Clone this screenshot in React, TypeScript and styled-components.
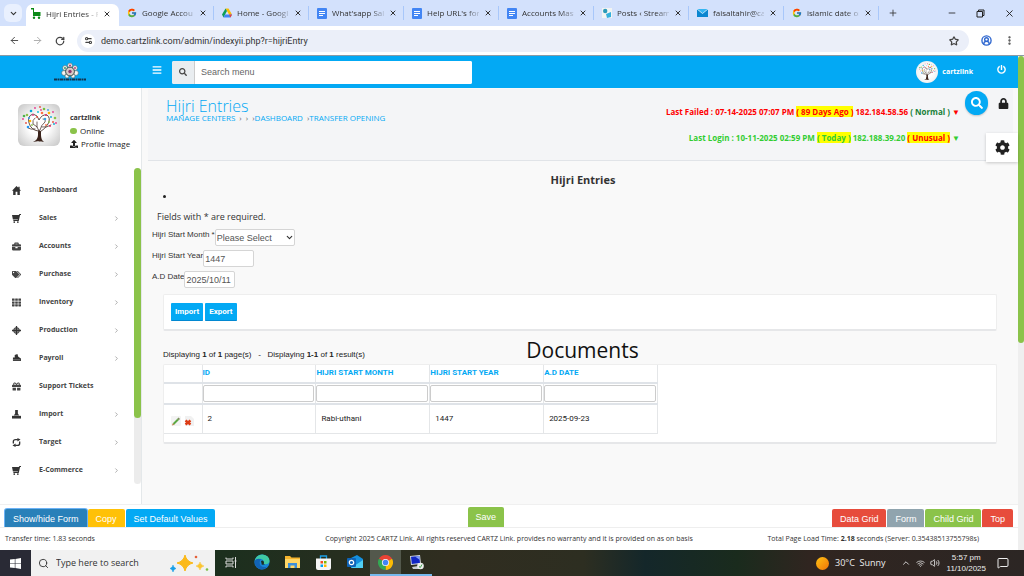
import React from 'react';
import styled, { createGlobalStyle, css } from 'styled-components';
import {
  ArrowLeft, ArrowRight, ChevronDown, ChevronRight, ChevronUp, CircleUserRound, EllipsisVertical,
  MessageSquare, Minus, Plus, RotateCw, Search, Settings2, Star, Volume2, Wifi, X,
} from 'lucide-react';
import {
  FaBars, FaBriefcase, FaCog, FaGift, FaLock, FaPowerOff, FaSearch, FaTags, FaTh, FaUpload,
} from 'react-icons/fa';
import { FcGoogle } from 'react-icons/fc';

const blue = '#03a9f4';
const green = '#8bc34a';
const ui = '"Open Sans", "Noto Sans", sans-serif';
const arial = '"Liberation Sans", Arial, sans-serif';
const roboto = 'Roboto, sans-serif';

const GlobalStyle = createGlobalStyle`
  *, *::before, *::after { box-sizing: border-box; }
  body { margin: 0; font-family: ${ui}; font-size: 8px; line-height: 12px; color: #333; background: #fff; }
  button, input, select { font: inherit; color: inherit; margin: 0; }
  button { border: 0; padding: 0; background: none; display: inline-flex; align-items: center; justify-content: center; }
  a { color: inherit; text-decoration: none; }
  h1, h2, h3, p, ul { margin: 0; padding: 0; font-weight: 400; }
  ul { list-style: none; }
  svg { display: block; flex: none; }
`;

const Screen = styled.div`
  min-height: 100vh;
  display: flex;
  flex-direction: column;
`;

/* ---------- Browser chrome ---------- */

const TabStrip = styled.div`
  height: 26px;
  flex: none;
  display: flex;
  align-items: center;
  padding-left: 4px;
  background: #d3e1fc;
  color: #333;
`;

const TabSearch = styled.button`
  width: 18px;
  height: 18px;
  flex: none;
  margin-right: 4px;
  border-radius: 6px;
  background: #e9f0fe;
`;

const Tab = styled.div<{ $active?: boolean }>`
  flex: 0 1 95px;
  min-width: 0;
  height: 14px;
  display: flex;
  align-items: center;
  gap: 5px;
  padding: 0 6px 0 8px;
  border-right: 1px solid #a8c7fa;
  ${(p) => p.$active && css`
    flex-basis: 93px;
    height: 22px;
    align-self: flex-end;
    padding: 0 8px 3px 5px;
    border: 0;
    border-radius: 7px 7px 0 0;
    background: #fff;
  `}
`;

const TabTitle = styled.span`
  flex: 1;
  min-width: 0;
  white-space: nowrap;
  mask-image: linear-gradient(90deg, #000 75%, #0003);
`;

const WindowButtons = styled.div`
  margin-left: auto;
  display: flex;
  gap: 19px;
  padding-right: 9px;
  color: #222;
`;

const NewTab = styled.button`
  margin-left: 9px;
`;

const Toolbar = styled.div`
  height: 30px;
  flex: none;
  display: flex;
  align-items: center;
  gap: 12px;
  padding: 0 9px;
  border-bottom: 1px solid #8a9aa5;
  background: #fff;
  color: #444;
`;

const AddressBar = styled.div`
  flex: 1;
  height: 22px;
  display: flex;
  align-items: center;
  gap: 6px;
  padding: 0 10px 0 4px;
  border-radius: 11px;
  background: #ebeff9;
`;

const SiteInfo = styled.button`
  width: 14px;
  height: 14px;
  border-radius: 7px;
  background: #fff;
`;

const Address = styled.input`
  flex: 1;
  min-width: 0;
  height: 18px;
  padding: 0;
  border: 0;
  background: none;
  color: #333;
  font-family: ${roboto};
  font-size: 9px;
`;

/* ---------- Page frame ---------- */

const Viewport = styled.div`
  flex: 1;
  display: flex;
`;

const Site = styled.div`
  position: relative;
  flex: 1;
  min-width: 0;
  display: flex;
  flex-direction: column;
`;

const PageTrack = styled.div`
  width: 6px;
  flex: none;
  background: #efefef;
`;

const PageThumb = styled.div`
  height: 58%;
  border-radius: 3px;
  background: ${green};
`;

const Header = styled.header`
  height: 32px;
  flex: none;
  display: flex;
  align-items: center;
  padding-right: 12px;
  background: ${blue};
  color: #fff;
`;

const LogoLink = styled.a`
  flex: 0 0 139px;
  display: flex;
  justify-content: center;
`;

const MenuButton = styled.button`
  flex: 0 0 33px;
  padding: 0 0 5px 2px;
`;

const MenuSearch = styled.label`
  flex: 0 1 300px;
  height: 23px;
  display: flex;
  border-radius: 2px;
  overflow: hidden;
  background: #fff;
  color: #444;
`;

const SearchAddon = styled.span`
  width: 23px;
  display: flex;
  align-items: center;
  justify-content: center;
  border-right: 1px solid #ccc;
  background: #e9edf0;
`;

const MenuSearchInput = styled.input`
  flex: 1;
  min-width: 0;
  padding: 0 6px;
  border: 0;
  font-family: ${arial};
  font-size: 9px;
  &::placeholder { color: #666; opacity: 1; }
`;

const Account = styled.a`
  margin-left: auto;
  display: flex;
  align-items: center;
  gap: 4px;
  font-size: 7px;
  font-weight: 700;
`;

const Avatar = styled.span<{ $large?: boolean }>`
  width: ${(p) => (p.$large ? 42 : 22)}px;
  height: ${(p) => (p.$large ? 42 : 22)}px;
  flex: none;
  display: flex;
  align-items: center;
  justify-content: center;
  border-radius: ${(p) => (p.$large ? '6px' : '50%')};
  background: radial-gradient(circle, #fff 35%, ${(p) => (p.$large ? '#c4c4c4' : '#e4e4e4')});
`;

const PowerButton = styled.button`
  margin-left: 24px;
  padding-bottom: 5px;
`;

const Body = styled.div`
  flex: 1;
  display: flex;
`;

/* ---------- Sidebar ---------- */

const Sidebar = styled.aside`
  width: 142px;
  flex: none;
  display: flex;
  flex-direction: column;
  border-right: 1px solid #e4e8ea;
  background: #fff;
`;

const Profile = styled.div`
  height: 80px;
  display: flex;
  gap: 10px;
  padding: 16px 0 0 18px;
`;

const ProfileLines = styled.div`
  display: flex;
  flex-direction: column;
  gap: 1px;
  padding-top: 8px;
  white-space: nowrap;
`;

const ProfileLine = styled.div`
  display: flex;
  align-items: center;
  gap: 3px;
  color: #222;
`;

const ProfileName = styled.strong`
  font-size: 7px;
`;

const Dot = styled.span`
  width: 7px;
  height: 6px;
  border-radius: 3px;
  background: ${green};
`;

const NavArea = styled.div`
  flex: 1;
  display: flex;
  padding-bottom: 20px;
`;

const NavList = styled.ul`
  flex: 1;
  display: flex;
  flex-direction: column;
  padding-top: 8px;
`;

const NavItem = styled.li`
  flex: 1;
  display: flex;
`;

const NavLink = styled.a`
  flex: 1;
  display: grid;
  grid-template-columns: 27px 1fr auto;
  align-items: center;
  padding: 0 14px 0 12px;
  color: #444;
  font-size: 7px;
  font-weight: 700;
`;

const NavTrack = styled.div`
  width: 7px;
  border-radius: 4px;
  background: #ececec;
`;

const NavThumb = styled.div`
  height: 79%;
  border-radius: 4px;
  background: ${green};
`;

/* ---------- Main column ---------- */

const Main = styled.main`
  flex: 1;
  min-width: 0;
  padding: 1px 5px 0 6px;
  background: #f9f9f9;
`;

const PageHead = styled.section`
  height: 72px;
  display: flex;
  justify-content: space-between;
  padding: 9px 53px 0 18px;
  border-bottom: 1px solid #e1e4e8;
  background: #f4f5f7;
`;

const PageTitle = styled.h1`
  font-size: 16px;
  line-height: 16px;
  font-weight: 300;
  color: ${blue};
`;

const Crumbs = styled.nav`
  display: flex;
  gap: 4px;
  line-height: 8px;
  color: #666;
  a { color: ${blue}; }
`;

const Logins = styled.div`
  display: flex;
  flex-direction: column;
  align-items: flex-end;
  gap: 14px;
  padding-top: 8px;
  white-space: nowrap;
`;

const LoginLine = styled.p<{ $tone: string }>`
  font-weight: 700;
  color: ${(p) => p.$tone};
`;

const Mark = styled.mark<{ $tone: string }>`
  background: #ff0;
  color: ${(p) => p.$tone};
`;

const Normal = styled.span`
  color: #188038;
`;

const FloatingSearch = styled.button`
  position: absolute;
  top: 35px;
  right: 30px;
  width: 23px;
  height: 24px;
  border-radius: 12px;
  background: ${blue};
  color: #fff;
  box-shadow: 0 1px 2px #0003;
`;

const FloatingLock = styled.button`
  position: absolute;
  top: 42px;
  right: 9px;
  color: #222;
`;

const FloatingSettings = styled.button`
  position: absolute;
  top: 77px;
  right: 0;
  width: 32px;
  height: 29px;
  background: #fff;
  color: #222;
  box-shadow: 0 1px 3px #0003;
`;

const FormTitle = styled.h2`
  padding: 11px 0 0 5px;
  text-align: center;
  font-size: 11px;
  line-height: 16px;
  font-weight: 700;
`;

const Errors = styled.ul`
  list-style: disc;
  padding-left: 28px;
  margin-bottom: 6px;
  font-size: 9px;
  line-height: 16px;
  color: #222;
`;

const Hint = styled.p`
  padding-left: 9px;
  font-size: 9px;
  line-height: 14px;
`;

const Fields = styled.form`
  display: flex;
  flex-direction: column;
  gap: 4px;
  padding: 5px 0 6px 4px;
`;

const Field = styled.div`
  display: flex;
  font-family: ${arial};
  font-size: 8px;
`;

const control = css`
  height: 17px;
  border: 1px solid #d5d5d5;
  border-radius: 2px;
  background: #fff;
  color: #555;
  font-family: ${arial};
  font-size: 9px;
`;

const TextInput = styled.input`
  ${control}
  width: 51px;
  padding: 0 1px;
`;

const SelectBox = styled.span`
  position: relative;
  display: flex;
  svg { position: absolute; right: 1px; top: 4px; pointer-events: none; }
`;

const Select = styled.select`
  ${control}
  width: 80px;
  padding: 0 1px;
  appearance: none;
`;

const Card = styled.section`
  margin: 0 16px 0 15px;
  border: 1px solid #eee;
  border-bottom: 2px solid #e6e7e9;
  border-radius: 2px;
  background: #fff;
`;

const ImportCard = styled(Card)`
  display: flex;
  gap: 2px;
  padding: 8px 7px;
`;

const SmallButton = styled.button`
  height: 18px;
  padding: 0 4px;
  border-radius: 1px;
  border-bottom: 1px solid #0288d1;
  background: ${blue};
  color: #fff;
  font-family: ${roboto};
  font-size: 8px;
  font-weight: 700;
`;

const GridHead = styled.div`
  display: grid;
  grid-template-columns: 1fr auto 1fr;
  align-items: end;
  padding: 7px 11px 2px 15px;
  h2 { font-size: 21px; line-height: 24px; color: #111; }
`;

const Summary = styled.p`
  padding-bottom: 1px;
  font-family: ${arial};
  color: #222;
  white-space: pre;
`;

const GridCard = styled(Card)`
  padding-bottom: 8px;
`;

const Table = styled.table`
  width: 494px;
  max-width: 100%;
  table-layout: fixed;
  border-collapse: collapse;
  font-family: ${roboto};
  font-size: 8px;
  text-align: left;
  color: #222;
`;

const Th = styled.th<{ $narrow?: boolean }>`
  width: ${(p) => (p.$narrow ? '38px' : 'auto')};
  height: 18px;
  padding: 0 0 1px;
  border-right: 1px solid #e4e6e8;
  border-bottom: 2px solid #dfe3e8;
  color: ${blue};
  font-weight: 700;
`;

const FilterCell = styled.td`
  height: 21px;
  padding: 0 1px 0 0;
  border-right: 1px solid #e4e6e8;
  border-bottom: 2px solid #dfe3e8;
`;

const Filter = styled.input`
  ${control}
  display: block;
  width: 100%;
  border-color: #ccc;
`;

const Td = styled.td<{ $icons?: boolean }>`
  height: 29px;
  padding: ${(p) => (p.$icons ? '5px 0 0 7px' : '0 5px')};
  border-right: 1px solid #e4e6e8;
  border-bottom: 1px solid #e4e6e8;
`;

const RowActions = styled.div`
  display: flex;
  gap: 3px;
`;

/* ---------- Bottom bars ---------- */

const ActionBar = styled.div`
  height: 23px;
  flex: none;
  display: grid;
  grid-template-columns: 10fr auto 11fr;
  align-items: end;
  padding: 0 5px;
  border-top: 1px solid #f0f0f0;
  background: #fff;
`;

const ButtonGroup = styled.div<{ $end?: boolean }>`
  display: flex;
  align-items: flex-end;
  gap: 1px;
  justify-content: ${(p) => (p.$end ? 'flex-end' : 'flex-start')};
`;

const ActionButton = styled.button<{ $bg: string; $tall?: boolean; $focus?: boolean }>`
  height: ${(p) => (p.$tall ? 20 : 18)}px;
  padding: ${(p) => (p.$tall ? 0 : 2)}px 8px 0;
  border-radius: 2px 2px 0 0;
  background: ${(p) => p.$bg};
  color: #fff;
  font-family: ${arial};
  font-size: 9px;
  white-space: nowrap;
  ${(p) => p.$focus && css`box-shadow: 0 0 0 1px #6cb2f5;`}
`;

const Footer = styled.footer`
  height: 23px;
  flex: none;
  display: grid;
  grid-template-columns: 1fr auto 1fr;
  align-items: center;
  padding: 0 5px;
  border-top: 1px solid #eee;
  background: #fff;
  font-size: 7px;
  white-space: nowrap;
`;

const LoadTime = styled.p`
  padding-right: 34px;
  text-align: right;
`;

/* ---------- Taskbar ---------- */

const Taskbar = styled.div`
  height: 26px;
  flex: none;
  display: flex;
  background: linear-gradient(90deg, #1c2f1e 22%, #302d20 44%, #2d2e21 57%, #14272a 63%, #1a2b1d 72%, #302520 79%, #2c2624 100%);
  color: #eee;
`;

const StartButton = styled.button`
  width: 31px;
  background: #292a35;
`;

const TaskSearch = styled.label`
  width: 184px;
  display: flex;
  align-items: center;
  gap: 7px;
  padding: 0 6px 0 7px;
  background: #f1f1f1;
  color: #333;
`;

const TaskSearchInput = styled.input`
  flex: 1;
  min-width: 0;
  padding: 0;
  border: 0;
  background: none;
  font-size: 9px;
  &::placeholder { color: #333; opacity: 1; }
`;

const TaskApp = styled.button<{ $state?: 'open' | 'active' }>`
  width: 31px;
  border-bottom: 2px solid ${(p) => (p.$state ? '#76b9ed' : 'transparent')};
  background: ${(p) => (p.$state === 'active' ? '#53584c' : 'none')};
`;

const Tray = styled.div`
  margin-left: auto;
  display: flex;
  align-items: center;
  gap: 5px;
  padding-right: 15px;
`;

const Weather = styled.button`
  gap: 6px;
  margin-right: 10px;
  font-size: 9px;
  white-space: pre;
`;

const Sun = styled.span`
  width: 13px;
  height: 13px;
  border-radius: 7px;
  background: linear-gradient(135deg, #ffc313, #f07308);
`;

const Clock = styled.time`
  padding: 0 6px 0 2px;
  text-align: center;
  font-family: ${arial};
  line-height: 11px;
`;

/* ---------- Drawings ---------- */

const leaves: [number, number, string][] = [
  [13, 7, '#00a9d8'], [17, 4, '#e5398f'], [22, 3, '#e74c3c'], [26, 5, '#7bbf3f'], [30, 6, '#3aa0e0'], [35, 8, '#e5398f'],
  [9, 11, '#8bc34a'], [5, 15, '#e5398f'], [8, 19, '#e74c3c'], [12, 17, '#ffb300'], [15, 11, '#e5398f'], [20, 8, '#00bcd4'],
  [24, 9, '#ff7043'], [28, 11, '#e91e63'], [33, 13, '#00a9d8'], [37, 14, '#8bc34a'], [38, 19, '#e5398f'], [35, 18, '#e74c3c'],
  [10, 23, '#2196f3'], [14, 21, '#8bc34a'], [31, 18, '#8bc34a'], [27, 15, '#3aa0e0'], [36, 20, '#00a9d8'], [32, 22, '#e91e63'],
  [6, 12, '#4caf50'], [19, 13, '#e74c3c'], [11, 14, '#2196f3'], [31, 9, '#ffb300'], [23, 6, '#e5398f'], [28, 21, '#ff7043'],
];

const Tree = ({ size }: { size: number }) => (
  <svg width={size} height={size} viewBox="0 0 42 42">
    <g fill="none" stroke="#3b241c" strokeLinecap="round">
      <path d="M21 31V26M20 27Q13 26 11 19Q9 12 15 10Q20 11 21 16Q24 10 29 11Q33 14 30 20Q27 25 22 28" strokeWidth=".8" />
      <path d="M21 27Q20 22 15 20Q14 16 17 14M22 26Q23 21 27 18Q28 15 25 15M19 23V18M24 23Q29 24 33 21M17 25Q13 26 10 24" strokeWidth=".7" />
      <path d="M21.500 36V28" strokeWidth="3" />
    </g>
    <path d="M15 38Q20 36 20 31H23Q23 36 26 38L21 37Z" fill="#3b241c" />
    {leaves.map(([x, y, c], i) => <circle key={i} cx={x} cy={y} r={i % 3 ? 0.9 : 1.3} fill={c} />)}
  </svg>
);

const Logo = () => (
  <svg width="34" height="20" viewBox="0 0 34 20">
    <g fill="#f4f4f4" stroke="#5b6b66" strokeWidth=".6">
      <circle cx="17" cy="3.5" r="2.4" /><circle cx="12" cy="6" r="2.4" /><circle cx="22" cy="6" r="2.4" />
      <circle cx="11" cy="11" r="2.4" /><circle cx="23" cy="11" r="2.4" /><circle cx="14" cy="14" r="2" /><circle cx="20" cy="14" r="2" />
    </g>
    <circle cx="17" cy="9.5" r="4.4" fill="#d9c9c6" stroke="#38544d" />
    <circle cx="17" cy="9.5" r="1.7" fill="#8d3b6b" />
    <circle cx="17" cy="3.4" r="1" fill="#b52b72" /><circle cx="12" cy="6" r=".9" fill="#2b8a57" /><circle cx="22" cy="6" r=".9" fill="#b52b72" />
    <path d="M1 17.5H33" stroke="#12344f" strokeWidth="2" strokeDasharray="3 .5 2 .5" />
  </svg>
);

const CartFavicon = () => (
  <svg width="10" height="11" viewBox="0 0 10 11" fill="#0a8a16">
    <path d="M0 0H3V4H9.5V8H2V1.5H0Z" /><circle cx="3" cy="9.7" r="1.2" /><circle cx="8" cy="9.7" r="1.2" />
  </svg>
);
const DriveIcon = () => (
  <svg width="10" height="10" viewBox="0 0 20 18">
    <path d="M7 0H13L20 12H14Z" fill="#fbbc04" /><path d="M7 0L10 5L3 18L0 12Z" fill="#0f9d58" /><path d="M6 12H20L17 18H3Z" fill="#4285f4" />
    <path d="M14 12H20L17 18Z" fill="#ea4335" />
  </svg>
);
const DocsIcon = () => (
  <svg width="10" height="11" viewBox="0 0 10 11"><rect width="10" height="11" rx="1" fill="#4285f4" /><path d="M2 3.5H8M2 5.5H8M2 7.5H6" stroke="#fff" /></svg>
);
const PostsIcon = () => (
  <svg width="10" height="10" viewBox="0 0 10 10"><rect width="10" height="10" fill="#f2f4f2" /><circle cx="3.2" cy="3" r="2.2" fill="#2a9ab8" /><path d="M4 6L9 4V9L5 10Z" fill="#35b0dc" /></svg>
);
const MailIcon = () => (
  <svg width="11" height="8" viewBox="0 0 11 8"><rect width="11" height="8" fill="#0b86d0" /><path d="M0 0H11L5.5 4.5Z" fill="#35b5f2" /><path d="M0 0L5.5 4.5L11 0" fill="none" stroke="#fff" strokeWidth=".7" /></svg>
);
const RestoreIcon = () => (
  <svg width="9" height="9" viewBox="0 0 9 9" fill="none" stroke="#222"><path d="M1 2.500H6.500V8H1ZM2.500 2V1H8V6.500H7" /></svg>
);

const HomeIcon = () => (
  <svg width="9" height="9" viewBox="0 0 10 10" fill="#333"><path d="M5 0L7 2V.8H8.500V3.500L10 5.200H8.700V10H6V6.500H4V10H1.300V5.200H0Z" /></svg>
);
const GlobeTarget = () => (
  <svg width="9" height="9" viewBox="0 0 10 10"><circle cx="5" cy="5" r="3.2" fill="#999" stroke="#333" /><path d="M5 0V10M0 5H10" stroke="#333" strokeWidth="1.4" /></svg>
);
const PayrollIcon = () => (
  <svg width="9" height="8" viewBox="0 0 10 9" fill="#333"><path d="M1 8V4H3V1L6 0L7 3L10 5V8Z" /><path d="M1 6.5H9" stroke="#aaa" strokeWidth=".6" /></svg>
);
const StampIcon = () => (
  <svg width="9" height="9" viewBox="0 0 10 10" fill="#333"><path d="M3.5 0H6.5V4L8 6H2L3.5 4Z" /><path d="M0 6.5H10V9.5H0Z" /></svg>
);
const CartIcon = () => (
  <svg width="9" height="9" viewBox="0 0 10 10" fill="#333"><path d="M0 1.200H7.500L8.300 0H10V1H9L7.500 7.800H1.500V6.800H6.500V6.200H1Z" /><circle cx="2.500" cy="9" r="1" /><circle cx="6.500" cy="9" r="1" /></svg>
);
const CycleIcon = () => (
  <svg width="9" height="9" viewBox="0 0 10 10"><path d="M1.500 6V4Q1.500 1.800 4 1.800H6.500M8.500 4V6Q8.500 8.200 6 8.200H3.500" fill="none" stroke="#333" strokeWidth="1.500" /><path d="M6 0L9.500 1.800L6 4ZM4 6L.5 8.200L4 10Z" fill="#333" /></svg>
);

const PencilIcon = () => (
  <svg width="10" height="10" viewBox="0 0 10 10"><rect width="10" height="10" rx="1" fill="#f3f3f3" /><path d="M2.500 8L7 3.500" stroke="#5ba843" strokeWidth="2" /><path d="M1 9.5L1.8 7.2L3.3 8.8Z" fill="#b77b3f" /><path d="M7 3.500L8.300 2.200" stroke="#7c8f5c" strokeWidth="2" /></svg>
);
const DeleteIcon = () => (
  <svg width="10" height="10" viewBox="0 0 10 10"><path d="M1 0H7L10 3V10H1Z" fill="#f1f1f1" /><path d="M1.500 4.500L6.500 8.500M6.500 4.500L1.500 8.500" stroke="#dd3b14" strokeWidth="2.400" /></svg>
);

const WindowsIcon = () => (
  <svg width="11" height="11" viewBox="0 0 11 11" fill="#fff"><path d="M0 1.6L4.8 1V5.2H0ZM5.4 .9L11 0V5.2H5.4ZM0 5.8H4.8V10L0 9.4ZM5.4 5.8H11V11L5.4 10.1Z" /></svg>
);
const Sparkles = () => (
  <svg width="40" height="18" viewBox="0 0 40 18">
    <path d="M16 1Q17.500 7.500 24 9Q17.500 10.500 16 17Q14.500 10.500 8 9Q14.500 7.500 16 1Z" fill="#fbb91a" stroke="#fbb91a" />
    <path d="M31 8Q31.500 11 35 12Q31.500 13 31 16Q30.500 13 27 12Q30.500 11 31 8Z" fill="#fbc531" stroke="#fbc531" strokeWidth=".5" />
    <path d="M4 11Q4.500 14 7 14.500Q4.500 15 4 18Q3.500 15 1 14.500Q3.500 14 4 11Z" fill="#1ba0e8" stroke="#1ba0e8" strokeWidth=".5" />
    <circle cx="27" cy="3" r="1.300" fill="#e5603a" /><circle cx="38" cy="15.500" r="1.300" fill="#7bc043" />
  </svg>
);
const TaskViewIcon = () => (
  <svg width="12" height="11" viewBox="0 0 12 11" fill="none" stroke="#ddd"><path d="M1 .5V2H8V.5M1 10.500V9H8V10.500M1 4H8V7H1ZM10.500 0V11M9.500 4H11.500" /></svg>
);
const EdgeIcon = () => (
  <svg width="16" height="16" viewBox="0 0 16 16">
    <circle cx="8" cy="8" r="7.600" fill="#1785d6" /><path d="M.6 7Q2 .4 8.500 .4Q15.400 1 15.600 7Q15 10.500 11 10.300Q8.800 9.900 10 8Q9.500 5 6 4.800Q2 5 .6 7Z" fill="#3fc9a5" />
    <path d="M.6 7Q3 3.500 7 5.200Q4.500 8 6.500 11.500Q9 14 13.500 12.500Q9 17 4.500 14.600Q.4 12 .6 7Z" fill="#1264b5" /><path d="M7 7Q9 5.500 10 8Q9 10 11 10.600L7.800 10.800Z" fill="#1d3020" />
  </svg>
);
const FolderIcon = () => (
  <svg width="15" height="12" viewBox="0 0 15 12"><path d="M0 0H5L6.500 1.500H15V12H0Z" fill="#f5b52e" /><path d="M0 3H15V12H0Z" fill="#ffd766" /><path d="M3 12V7H12V12H9.500V9.500H5.500V12Z" fill="#3c8fd9" /></svg>
);
const StoreIcon = () => (
  <svg width="15" height="15" viewBox="0 0 15 15"><path d="M4.500 4V1H10.500V4" fill="none" stroke="#1ba0e8" strokeWidth="1.300" /><path d="M0 3.500H15V13Q15 15 13 15H2Q0 15 0 13Z" fill="#f5f5f5" /><path d="M4.500 6H7V8.500H4.500Z" fill="#f25022" /><path d="M8 6H10.500V8.500H8Z" fill="#7fba00" /><path d="M4.500 9.500H7V12H4.500Z" fill="#00a4ef" /><path d="M8 9.500H10.500V12H8Z" fill="#ffb900" /></svg>
);
const OutlookIcon = () => (
  <svg width="16" height="14" viewBox="0 0 16 14"><path d="M4 3L10 0L16 4V13H4Z" fill="#1490df" /><path d="M4 13L16 5V13Z" fill="#50d0f5" /><rect y="3" width="9" height="9" rx="1" fill="#0f64b8" /><circle cx="4.500" cy="7.500" r="2.200" fill="none" stroke="#fff" strokeWidth="1.200" /></svg>
);
const ChromeIcon = () => (
  <svg width="15" height="15" viewBox="0 0 16 16">
    <path d="M8 8L1.070 4A8 8 0 0 1 14.930 4Z" fill="#ea4335" /><path d="M8 8L14.930 4A8 8 0 0 1 8 16Z" fill="#fbbc04" /><path d="M8 8V16A8 8 0 0 1 1.070 4Z" fill="#34a853" />
    <circle cx="8" cy="8" r="3.800" fill="#fff" /><circle cx="8" cy="8" r="3" fill="#4285f4" />
  </svg>
);
const RemoteIcon = () => (
  <svg width="15" height="15" viewBox="0 0 15 15"><path d="M1 1L11 0L12 9L2 10Z" fill="#d9dde4" /><path d="M2 1.800L10.300 1L11 8L2.800 9Z" fill="#1226c4" /><path d="M6 1.500L10.300 1L11 5Z" fill="#7f9cf5" /><path d="M3 12L9 11L11 14H4Z" fill="#c9ccd2" /><circle cx="11.500" cy="11" r="3.300" fill="#eee" /><path d="M10 11.500L11.300 12.500L13 9.500" stroke="#39a047" fill="none" /></svg>
);

/* ---------- Data ---------- */

const tabs: { icon: React.ReactNode; title: string }[] = [
  { icon: <CartFavicon />, title: 'Hijri Entries - P' },
  { icon: <FcGoogle size={10} />, title: 'Google Accou' },
  { icon: <DriveIcon />, title: 'Home - Googl' },
  { icon: <DocsIcon />, title: "What'sapp Sal" },
  { icon: <DocsIcon />, title: "Help URL's for" },
  { icon: <DocsIcon />, title: 'Accounts Mast' },
  { icon: <PostsIcon />, title: 'Posts ‹ Stream' },
  { icon: <MailIcon />, title: 'faisaltahir@ca' },
  { icon: <FcGoogle size={10} />, title: 'islamic date or' },
];

const nav: { icon: React.ReactNode; label: string; leaf?: boolean }[] = [
  { icon: <HomeIcon />, label: 'Dashboard', leaf: true },
  { icon: <CartIcon />, label: 'Sales' },
  { icon: <FaBriefcase size={9} />, label: 'Accounts' },
  { icon: <FaTags size={9} />, label: 'Purchase' },
  { icon: <FaTh size={9} />, label: 'Inventory' },
  { icon: <GlobeTarget />, label: 'Production' },
  { icon: <PayrollIcon />, label: 'Payroll' },
  { icon: <FaGift size={9} />, label: 'Support Tickets', leaf: true },
  { icon: <StampIcon />, label: 'Import' },
  { icon: <CycleIcon />, label: 'Target' },
  { icon: <CartIcon />, label: 'E-Commerce' },
];

const columns = ['ID', 'HIJRI START MONTH', 'HIJRI START YEAR', 'A.D DATE'];
const rows = [['2', 'Rabi-uthani', '1447', '2025-09-23']];

export default function App() {
  return (
    <Screen>
      <GlobalStyle />
      <TabStrip>
        <TabSearch aria-label="Search tabs"><ChevronDown size={9} strokeWidth={3} /></TabSearch>
        {tabs.map((t, i) => (
          <Tab key={t.title} $active={i === 0}>
            {t.icon}
            <TabTitle>{t.title}</TabTitle>
            <button aria-label="Close tab"><X size={8} strokeWidth={3} /></button>
          </Tab>
        ))}
        <NewTab aria-label="New tab"><Plus size={10} /></NewTab>
        <WindowButtons>
          <button aria-label="Minimize"><Minus size={10} /></button>
          <button aria-label="Restore"><RestoreIcon /></button>
          <button aria-label="Close"><X size={11} strokeWidth={2} /></button>
        </WindowButtons>
      </TabStrip>
      <Toolbar>
        <button aria-label="Back"><ArrowLeft size={11} /></button>
        <button aria-label="Forward"><ArrowRight size={11} color="#aaa" /></button>
        <button aria-label="Reload"><RotateCw size={10} strokeWidth={3} /></button>
        <AddressBar>
          <SiteInfo aria-label="Site information"><Settings2 size={9} strokeWidth={3} /></SiteInfo>
          <Address aria-label="Address" defaultValue="demo.cartzlink.com/admin/indexyii.php?r=hijriEntry" />
          <button aria-label="Bookmark"><Star size={10} strokeWidth={3} /></button>
        </AddressBar>
        <button aria-label="Profile"><CircleUserRound size={11} strokeWidth={3} color="#2f67cf" /></button>
        <button aria-label="Menu"><EllipsisVertical size={11} strokeWidth={3} /></button>
      </Toolbar>

      <Viewport>
        <Site>
          <Header>
            <LogoLink href="#" aria-label="Cartz Link home"><Logo /></LogoLink>
            <MenuButton aria-label="Toggle menu"><FaBars size={10} /></MenuButton>
            <MenuSearch>
              <SearchAddon><FaSearch size={8} /></SearchAddon>
              <MenuSearchInput placeholder="Search menu" aria-label="Search menu" />
            </MenuSearch>
            <Account href="#"><Avatar><Tree size={20} /></Avatar>cartzlink</Account>
            <PowerButton aria-label="Log out"><FaPowerOff size={9} /></PowerButton>
          </Header>

          <Body>
            <Sidebar>
              <Profile>
                <Avatar $large><Tree size={42} /></Avatar>
                <ProfileLines>
                  <ProfileName>cartzlink</ProfileName>
                  <ProfileLine><Dot />Online</ProfileLine>
                  <ProfileLine as="a" href="#"><FaUpload size={8} />Profile Image</ProfileLine>
                </ProfileLines>
              </Profile>
              <NavArea>
                <NavList>
                  {nav.map((n) => (
                    <NavItem key={n.label}>
                      <NavLink href="#">
                        {n.icon}
                        {n.label}
                        {!n.leaf && <ChevronRight size={7} color="#777" />}
                      </NavLink>
                    </NavItem>
                  ))}
                </NavList>
                <NavTrack><NavThumb /></NavTrack>
              </NavArea>
            </Sidebar>

            <Main>
              <PageHead>
                <div>
                  <PageTitle>Hijri Entries</PageTitle>
                  <Crumbs>
                    <a href="#">MANAGE CENTERS</a><span>›</span><span>›</span>
                    <span>›<a href="#">DASHBOARD</a></span>
                    <span>›<a href="#">TRANSFER OPENING</a></span>
                  </Crumbs>
                </div>
                <Logins>
                  <LoginLine $tone="#f00">
                    Last Failed : 07-14-2025 07:07 PM <Mark $tone="#f00">( 89 Days Ago )</Mark> 182.184.58.56 <Normal>( Normal )</Normal> ▼
                  </LoginLine>
                  <LoginLine $tone="#32cd32">
                    Last Login : 10-11-2025 02:59 PM <Mark $tone="#32cd32">( Today )</Mark> 182.188.39.20 <Mark $tone="#f00">( Unusual )</Mark> ▼
                  </LoginLine>
                </Logins>
              </PageHead>

              <FormTitle>Hijri Entries</FormTitle>
              <Errors><li /></Errors>
              <Hint>Fields with * are required.</Hint>
              <Fields>
                <Field>
                  <label htmlFor="month">Hijri Start Month *</label>
                  <SelectBox>
                    <Select id="month"><option>Please Select</option></Select>
                    <ChevronDown size={9} strokeWidth={3} />
                  </SelectBox>
                </Field>
                <Field>
                  <label htmlFor="year">Hijri Start Year</label>
                  <TextInput id="year" defaultValue="1447" />
                </Field>
                <Field>
                  <label htmlFor="date">A.D Date</label>
                  <TextInput id="date" defaultValue="2025/10/11" />
                </Field>
              </Fields>

              <ImportCard>
                <SmallButton>Import</SmallButton>
                <SmallButton>Export</SmallButton>
              </ImportCard>

              <GridHead>
                <Summary>
                  Displaying <b>1</b> of <b>1</b> page(s)   -   Displaying <b>1-1</b> of <b>1</b> result(s)
                </Summary>
                <h2>Documents</h2>
              </GridHead>
              <GridCard>
                <Table>
                  <thead>
                    <tr>
                      <Th $narrow aria-label="Actions" />
                      {columns.map((c) => <Th key={c}><a href="#">{c}</a></Th>)}
                    </tr>
                  </thead>
                  <tbody>
                    <tr>
                      <FilterCell />
                      {columns.map((c) => <FilterCell key={c}><Filter aria-label={`Filter ${c}`} /></FilterCell>)}
                    </tr>
                    {rows.map((r) => (
                      <tr key={r[0]}>
                        <Td $icons>
                          <RowActions>
                            <button aria-label="Edit"><PencilIcon /></button>
                            <button aria-label="Delete"><DeleteIcon /></button>
                          </RowActions>
                        </Td>
                        {r.map((c) => <Td key={c}>{c}</Td>)}
                      </tr>
                    ))}
                  </tbody>
                </Table>
              </GridCard>
            </Main>
          </Body>

          <ActionBar>
            <ButtonGroup>
              <ActionButton $bg="#2980b9" $focus>Show/hide Form</ActionButton>
              <ActionButton $bg="#ffc107">Copy</ActionButton>
              <ActionButton $bg={blue}>Set Default Values</ActionButton>
            </ButtonGroup>
            <ActionButton $bg={green} $tall>Save</ActionButton>
            <ButtonGroup $end>
              <ActionButton $bg="#e74c3c">Data Grid</ActionButton>
              <ActionButton $bg="#90a4ae">Form</ActionButton>
              <ActionButton $bg={green}>Child Grid</ActionButton>
              <ActionButton $bg="#e74c3c">Top</ActionButton>
            </ButtonGroup>
          </ActionBar>
          <Footer>
            <p>Transfer time: 1.83 seconds</p>
            <p>Copyright 2025 CARTZ Link. All rights reserved CARTZ Link. provides no warranty and it is provided on as on basis</p>
            <LoadTime>Total Page Load Time: <b>2.18</b> seconds (Server: 0.35438513755798s)</LoadTime>
          </Footer>

          <FloatingSearch aria-label="Search"><FaSearch size={12} /></FloatingSearch>
          <FloatingLock aria-label="Lock screen"><FaLock size={11} /></FloatingLock>
          <FloatingSettings aria-label="Settings"><FaCog size={15} /></FloatingSettings>
        </Site>
        <PageTrack><PageThumb /></PageTrack>
      </Viewport>

      <Taskbar>
        <StartButton aria-label="Start"><WindowsIcon /></StartButton>
        <TaskSearch>
          <Search size={11} />
          <TaskSearchInput placeholder="Type here to search" aria-label="Type here to search" />
          <Sparkles />
        </TaskSearch>
        <TaskApp aria-label="Task view"><TaskViewIcon /></TaskApp>
        <TaskApp aria-label="Edge"><EdgeIcon /></TaskApp>
        <TaskApp aria-label="File Explorer"><FolderIcon /></TaskApp>
        <TaskApp aria-label="Store"><StoreIcon /></TaskApp>
        <TaskApp aria-label="Outlook"><OutlookIcon /></TaskApp>
        <TaskApp aria-label="Chrome" $state="active"><ChromeIcon /></TaskApp>
        <TaskApp aria-label="Remote Desktop" $state="open"><RemoteIcon /></TaskApp>
        <Tray>
          <Weather><Sun />30°C  Sunny</Weather>
          <ChevronUp size={10} />
          <Wifi size={9} />
          <Volume2 size={10} />
          <Clock>5:57 pm<br />11/10/2025</Clock>
          <MessageSquare size={12} />
        </Tray>
      </Taskbar>
    </Screen>
  );
}
